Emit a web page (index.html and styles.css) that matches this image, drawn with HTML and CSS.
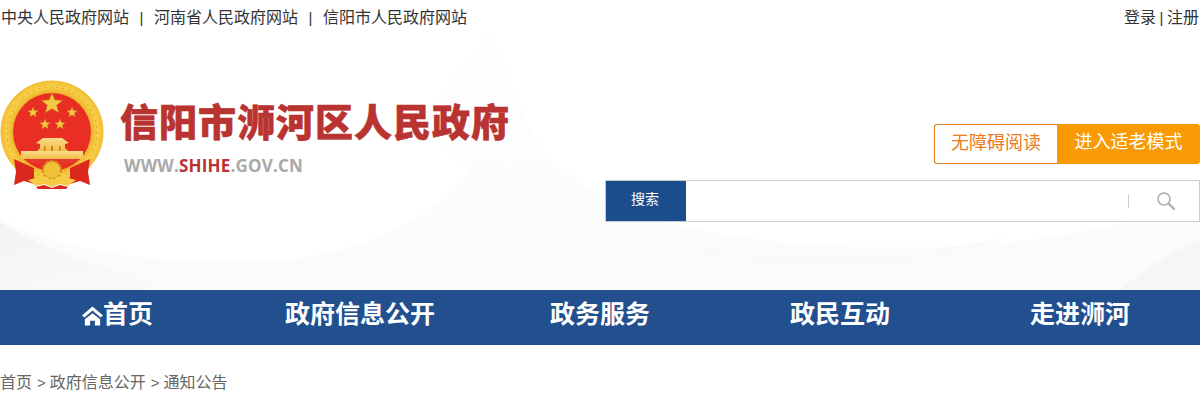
FILE: index.html
```html
<!DOCTYPE html>
<html lang="zh-CN">
<head>
    <meta charset="utf-8" />
    <meta name="viewport" content="width=device-width, initial-scale=1" />
    <title>信阳市浉河区人民政府</title>
    <link rel="stylesheet" href="styles.css">
</head>
<body>

<div class="head-wrap">
    <!-- faint mountains behind the header -->
    <svg class="head-bg" viewBox="0 0 1200 290" preserveAspectRatio="none" aria-hidden="true">
        <defs>
            <linearGradient id="fade" x1="0" y1="0" x2="0" y2="1">
                <stop offset="0" stop-color="#fefefe"/>
                <stop offset="1" stop-color="#fbfbfb"/>
            </linearGradient>
            <linearGradient id="swath" x1="0" y1="0" x2="1" y2="1">
                <stop offset="0" stop-color="#f3f3f3"/>
                <stop offset="1" stop-color="#fcfcfc"/>
            </linearGradient>
        </defs>
        <path d="M0 218 C60 250 140 262 250 262 C340 262 430 225 470 170 L420 120 L490 30 L530 130 C570 190 640 225 760 240 C900 255 1040 250 1200 205 L1200 290 L0 290 Z" fill="url(#fade)"/>
        <path d="M0 222 C60 258 130 280 230 290 L0 290 Z" fill="url(#swath)"/>
        <path d="M1120 290 C1150 265 1175 250 1200 240 L1200 290 Z" fill="#f6f6f6"/>
        <path d="M620 232 C760 262 900 262 1010 236 C900 285 740 275 620 232 Z" fill="#fafafa"/>
    </svg>

    <div class="topbar">
        <div class="top-links">
            <a href="#">中央人民政府网站</a>
            <span class="sep">|</span>
            <a href="#">河南省人民政府网站</a>
            <span class="sep">|</span>
            <a href="#">信阳市人民政府网站</a>
        </div>
        <div class="user-links">
            <a href="#">登录</a>
            <span class="user-sep">|</span>
            <a href="#">注册</a>
        </div>
    </div>

    <div class="header">
        <div class="logo">
            <svg class="emblem" viewBox="0 0 104 112" aria-hidden="true">
                <defs>
                    <radialGradient id="gold" cx=".5" cy=".5" r=".5">
                        <stop offset=".76" stop-color="#eeb52b"/>
                        <stop offset=".88" stop-color="#f8d04a"/>
                        <stop offset="1" stop-color="#f2bc30"/>
                    </radialGradient>
                    <linearGradient id="gate" x1="0" y1="0" x2="0" y2="1">
                        <stop offset="0" stop-color="#f8dc8c"/>
                        <stop offset="1" stop-color="#f0bd45"/>
                    </linearGradient>
                </defs>
                <circle cx="52" cy="52" r="51.500" fill="url(#gold)"/>
                <circle cx="52" cy="52" r="45" fill="none" stroke="#dfa520" stroke-width="1" stroke-dasharray="2 4"/>
                <circle cx="52" cy="52" r="39" fill="#e92f24"/>
                <path d="M52 13 L54.900 20 L62.400 20.500 L56.700 25.300 L58.500 32.600 L52 28.700 L45.500 32.600 L47.300 25.300 L41.600 20.500 L49.100 20 Z" fill="#f5c842" stroke="#b9801a" stroke-width=".5"/>
                <path d="M33 27 L34.400 30.500 L38.200 30.700 L35.300 33.100 L36.200 36.800 L33 34.800 L29.800 36.800 L30.700 33.100 L27.800 30.700 L31.600 30.500 Z" fill="#f5c842" stroke="#b9801a" stroke-width=".3"/>
                <path d="M72 27 L73.400 30.500 L77.200 30.700 L74.300 33.100 L75.200 36.800 L72 34.800 L68.800 36.800 L69.700 33.100 L66.800 30.700 L70.600 30.500 Z" fill="#f5c842" stroke="#b9801a" stroke-width=".3"/>
                <path d="M45 39 L46.400 42.500 L50.200 42.700 L47.300 45.100 L48.200 48.800 L45 46.800 L41.800 48.800 L42.700 45.100 L39.800 42.700 L43.600 42.500 Z" fill="#f5c842" stroke="#b9801a" stroke-width=".3"/>
                <path d="M60 39 L61.400 42.500 L65.200 42.700 L62.300 45.100 L63.200 48.800 L60 46.800 L56.800 48.800 L57.700 45.100 L54.800 42.700 L58.600 42.500 Z" fill="#f5c842" stroke="#b9801a" stroke-width=".3"/>
                <path d="M43 58 L62 58 L69 63 L65 64 L65 68 L68 71 L37 71 L40 68 L40 64 L36 63 Z" fill="url(#gate)"/>
                <path d="M44 66 h1.500 v5 h-1.500 Z M51 66 h2 v5 h-2 Z M59 66 h1.500 v5 h-1.500 Z" fill="#d8731d"/>
                <rect x="21" y="71" width="62" height="8" fill="url(#gate)"/>
                <path d="M14 79 L34 88 L34 104 L24 101 L14 105 L16 92 Z" fill="#dc271c"/>
                <path d="M90 79 L70 88 L70 104 L80 101 L90 105 L88 92 Z" fill="#dc271c"/>
                <rect x="29" y="79" width="46" height="4" fill="#e7372b"/>
                <circle cx="52" cy="90" r="9" fill="#f1c137" stroke="#cf8f1a" stroke-width="2" stroke-dasharray="3 2"/>
                <path d="M28 100 L44 96 L52 100 L60 96 L76 100 L68 106 L60 104 L52 107 L44 104 L36 106 Z" fill="#f5cb46"/>
                <path d="M36 107 L44 105 L52 108 L60 105 L68 107 L66 109 L38 109 Z" fill="#dc271c"/>
            </svg>
            <div class="logo-text">
                <h1 class="site-name">信阳市浉河区人民政府</h1>
                <div class="site-url">WWW.<em>SHIHE</em>.GOV.CN</div>
            </div>
        </div>

        <div class="tools">
            <div class="mode-btns">
                <a class="btn-outline" href="#">无障碍阅读</a>
                <a class="btn-solid" href="#">进入适老模式</a>
            </div>
            <div class="search">
                <button class="search-label">搜索</button>
                <input class="search-input" type="text">
                <span class="search-line"></span>
                <svg class="search-icon" viewBox="0 0 18 18" aria-hidden="true">
                    <circle cx="7" cy="7" r="6" fill="none" stroke="#aeaeae" stroke-width="1.700"/>
                    <path d="M11.500 11.500 L17 17" stroke="#aeaeae" stroke-width="2.400" stroke-linecap="round"/>
                </svg>
            </div>
        </div>
    </div>
</div>

<div class="nav">
    <a href="#" class="nav-home">
        <svg class="home-icon" viewBox="0 0 22 20" aria-hidden="true">
            <path d="M11 0 L22 9.500 L19.500 11.500 L11 4.200 L2.500 11.500 L0 9.500 Z" fill="#fff"/>
            <path d="M11 7 L19 13.500 L19 20 L13.500 20 L13.500 15 L8.500 15 L8.500 20 L3 20 L3 13.500 Z" fill="#fff"/>
        </svg>首页
    </a>
    <a href="#">政府信息公开</a>
    <a href="#">政务服务</a>
    <a href="#">政民互动</a>
    <a href="#">走进浉河</a>
</div>

<div class="crumbs">
    <a href="#">首页</a>
    <span class="gt">&gt;</span>
    <a href="#">政府信息公开</a>
    <span class="gt">&gt;</span>
    <a href="#">通知公告</a>
</div>

</body>
</html>
```

FILE: styles.css
```css
* {
    margin: 0;
    padding: 0;
    box-sizing: border-box;
}

html, body {
    width: 100%;
    height: 100%;
}

body {
    overflow: hidden;
    background-color: white;
    font-family: "Liberation Sans", "Noto Sans CJK SC", sans-serif;
    font-size: 16px;
    color: #333;
}

a {
    color: inherit;
    text-decoration: none;
}

.head-wrap {
    position: relative;
    height: 290px;
}

.head-bg {
    position: absolute;
    top: 0;
    left: 0;
    width: 100%;
    height: 100%;
}

.topbar, .header {
    position: relative;
}

/* top links */
.topbar {
    display: flex;
    justify-content: space-between;
    height: 36px;
    line-height: 36px;
    padding-right: 1px;
}

.top-links {
    display: flex;
    padding-left: 1px;
}

.sep {
    width: 25px;
    text-align: center;
    font-size: 15px;
}

.user-links {
    display: flex;
}

.user-sep {
    width: 11px;
    text-align: center;
    font-size: 15px;
}

/* logo and search */
.header {
    display: flex;
    justify-content: space-between;
    align-items: flex-start;
}

.logo {
    display: flex;
    margin-top: 44px;
}

.emblem {
    width: 104px;
    height: 112px;
}

.logo-text {
    margin-left: 16px;
    padding-top: 18px;
}

.site-name {
    font-size: 38px;
    line-height: 50px;
    font-weight: 900;
    letter-spacing: 1px;
    color: #b93331;
    white-space: nowrap;
    -webkit-text-stroke: .6px #b93331;
}

.site-url {
    margin-top: 6px;
    padding-left: 4px;
    font-family: "Open Sans", sans-serif;
    font-size: 17px;
    line-height: 24px;
    font-weight: 700;
    letter-spacing: .2px;
    color: #a9a9a9;
}

.site-url em {
    font-style: normal;
    color: #b93331;
}

.tools {
    display: flex;
    flex-direction: column;
    align-items: flex-end;
    gap: 16px;
    margin-top: 88px;
}

.mode-btns {
    display: flex;
    height: 40px;
    font-size: 18px;
    line-height: 37px;
    text-align: center;
}

.btn-outline {
    width: 123px;
    border: 1px solid #e5802c;
    border-right: 0;
    border-radius: 3px 0 0 3px;
    background-color: white;
    color: #ea7a1e;
}

.btn-solid {
    width: 143px;
    border-radius: 0 3px 3px 0;
    background-color: #f99a04;
    color: white;
}

.search {
    display: flex;
    align-items: center;
    width: 595px;
    height: 42px;
    border: 1px solid #ccc;
    background-color: white;
}

.search-label {
    width: 80px;
    height: 100%;
    padding: 0 2px 6px 0;
    border: 0;
    background-color: #1b4d8c;
    color: white;
    font-family: inherit;
    font-size: 14px;
}

.search-input {
    flex: 1;
    height: 100%;
    border: 0;
    outline: 0;
    background: transparent;
}

.search-line {
    width: 1px;
    height: 14px;
    background-color: #ccc;
}

.search-icon {
    width: 18px;
    height: 18px;
    margin-left: 28px;
    margin-right: 24px;
}

/* main nav */
.nav {
    display: grid;
    grid-template-columns: repeat(5, 1fr);
    height: 55px;
    background-color: #22508f;
    color: white;
    font-size: 25px;
    font-weight: 700;
    line-height: 49px;
    text-align: center;
}

.nav-home {
    padding-right: 5px;
}

.home-icon {
    width: 21px;
    height: 20px;
    vertical-align: -3px;
}

/* breadcrumb */
.crumbs {
    display: flex;
    padding-top: 26px;
    line-height: 24px;
    color: #666;
}

.gt {
    padding: 0 4px 0 5px;
    font-size: 15px;
}
```
